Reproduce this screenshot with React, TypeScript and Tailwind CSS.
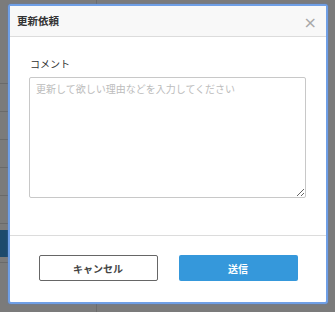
import React from "react";

export default function App() {
  const font = { fontFamily: '"Noto Sans CJK JP", "Noto Sans", sans-serif' };
  return (
    <div className="relative w-[335px] h-[312px] overflow-hidden bg-[#7b7b7b]" style={font}>
      {/* page behind the overlay */}
      <div className="flex h-full">
        <div className="w-[97px] border-r border-[#6c6c6c] flex flex-col">
          <div className="h-[84px] border-b border-[#6a6a6a]" />
          <div className="h-[28px] border-b border-[#6a6a6a]" />
          <div className="h-[28px] border-b border-[#6a6a6a]" />
          <div className="h-[28px] border-b border-[#6a6a6a]" />
          <div className="h-[28px] border-b border-[#6a6a6a]" />
          <div className="h-[28px] border-b border-[#6a6a6a]" />
          <div className="h-[6px]" />
          <div className="h-[27px] bg-[#1d4a6c]" />
          <div className="h-[6px] border-b border-[#6a6a6a]" />
        </div>
        <div className="flex-1" />
      </div>

      {/* modal */}
      <div className="absolute left-[8px] top-[4px] w-[320px] h-[300px] border-2 border-[#6f9fe6] rounded-[3px] bg-white flex flex-col shadow-[0_0_2px_rgba(80,130,220,0.6)]">
        <div className="h-[31px] bg-[#f8f8f8] border-b border-[#dcdcdc] flex items-center justify-between pl-[7px] pr-[9px]">
          <span className="text-[10.5px] font-bold text-[#333] leading-none">更新依頼</span>
          <span className="text-[16px] leading-none text-[#a8a8a8] mt-[3px]" style={{ fontFamily: '"DejaVu Sans", sans-serif' }}>×</span>
        </div>
        <div className="pt-[20px] pb-[37px] pl-[19px] pr-[20px] flex flex-col">
          <label className="text-[10px] leading-[14px] text-[#333] mb-[6px] pl-[1px]">コメント</label>
          <textarea
            className="w-full h-[121px] border border-[#c8c8c8] rounded-[2px] px-[6px] py-[4px] text-[10px] leading-[14px] text-[#333] placeholder:text-[#bcbcbc] outline-none"
            style={font}
            placeholder="更新して欲しい理由などを入力してください"
          />
        </div>
        <div className="border-t border-[#dcdcdc] flex-1 flex justify-center gap-[21px] pt-[19px]">
          <button className="w-[119px] h-[26px] border border-[#666] rounded-[2px] bg-white text-[10px] font-bold text-[#444]" style={font}>
            キャンセル
          </button>
          <button className="w-[119px] h-[26px] rounded-[2px] bg-[#3598db] text-[10px] font-bold text-white" style={font}>
            送信
          </button>
        </div>
      </div>
    </div>
  );
}
